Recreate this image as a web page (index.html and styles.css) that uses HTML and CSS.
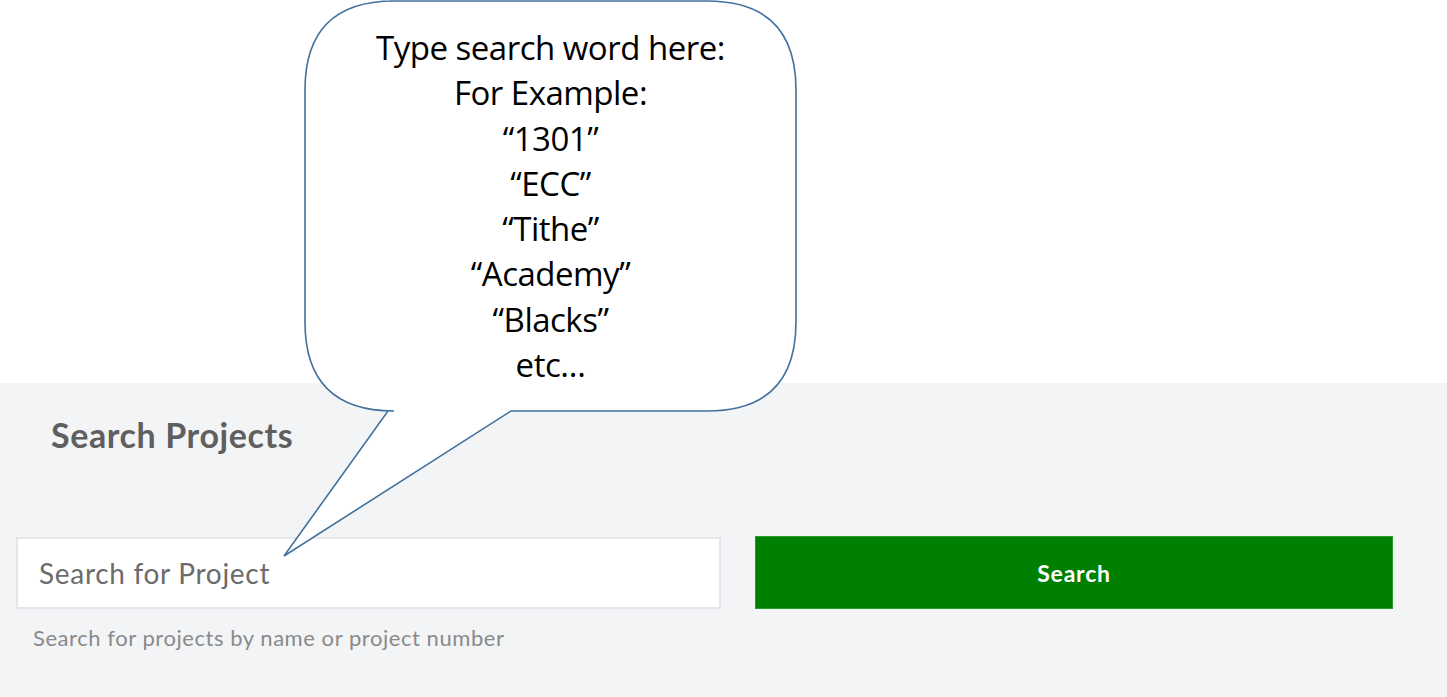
FILE: index.html
```html
<html lang="en">
<head>
    <meta charset="UTF-8">
    <meta name="viewport" content="width=device-width, initial-scale=1.0">
    <title>Search Projects</title>
    <link rel="stylesheet" href="styles.css">
</head>
<body>
    <div class="top-space"></div>
    <div class="search-panel">
        <h2 class="panel-title">Search Projects</h2>
        <div class="search-row">
            <div class="search-field">
                <input type="text" class="search-input" placeholder="Search for Project">
                <div class="search-help">Search for projects by name or project number</div>
            </div>
            <button class="search-btn">Search</button>
        </div>
    </div>
    <div class="callout">
        <svg class="callout-shape" width="520" height="570" viewBox="0 0 520 570">
            <path d="M 390 1 L 707 1 Q 796 1 796 90 L 796 322 Q 796 411 707 411 L 511 411 L 284 556 L 388 411 L 394 411 Q 305 411 305 322 L 305 90 Q 305 1 394 1 Z"
                  transform="translate(-280 0)" fill="#fff" stroke="#41719c" stroke-width="1.6"/>
        </svg>
        <div class="callout-text">
            <div>Type search word here:</div>
            <div>For Example:</div>
            <div>“1301”</div>
            <div>“ECC”</div>
            <div>“Tithe”</div>
            <div>“Academy”</div>
            <div>“Blacks”</div>
            <div>etc…</div>
        </div>
    </div>
</body>
</html>
```

FILE: styles.css
```css
body {
    font-family: Lato, "Open Sans", sans-serif;
    margin: 0;
    padding: 0;
    background: #fff;
    position: relative;
    overflow: hidden;
    height: 697px;
}
.top-space {
    height: 383px;
}
.search-panel {
    background: #f3f4f6;
    height: 314px;
    padding: 0 54px 0 16px;
    box-sizing: border-box;
}
.panel-title {
    margin: 0;
    padding: 32px 0 0 35px;
    font-size: 34px;
    font-weight: 700;
    color: #5f5f5f;
    letter-spacing: 0.6px;
    line-height: 40px;
}
.search-row {
    display: flex;
    gap: 34px;
    margin-top: 82px;
    align-items: flex-start;
}
.search-field {
    width: 705px;
}
.search-input {
    display: block;
    width: 100%;
    height: 72px;
    box-sizing: border-box;
    border: 2px solid #e5e6e9;
    background: #fff;
    padding: 0 21px;
    font-family: Lato, sans-serif;
    font-size: 28px;
    letter-spacing: 0.7px;
    color: #555;
    outline: none;
}
.search-input::placeholder {
    color: #6c6c6c;
}
.search-help {
    margin: 15px 0 0 17px;
    font-size: 22px;
    letter-spacing: 0.55px;
    color: #8a8a8a;
}
.search-btn {
    width: 638px;
    height: 73px;
    margin-top: -1px;
    background: #008000;
    color: #fff;
    border: 1px solid #2a9a2a;
    font-family: Lato, sans-serif;
    font-size: 23px;
    font-weight: 700;
    letter-spacing: 0.8px;
    cursor: pointer;
}
.callout {
    position: absolute;
    left: 280px;
    top: 0;
    width: 520px;
    height: 570px;
}
.callout-shape {
    position: absolute;
    left: 0;
    top: 0;
}
.callout-text {
    position: absolute;
    left: 25px;
    top: 25px;
    width: 491px;
    text-align: center;
    font-family: "Open Sans", sans-serif;
    font-size: 33px;
    line-height: 45.3px;
    color: #000;
    letter-spacing: -0.5px;
}
```
